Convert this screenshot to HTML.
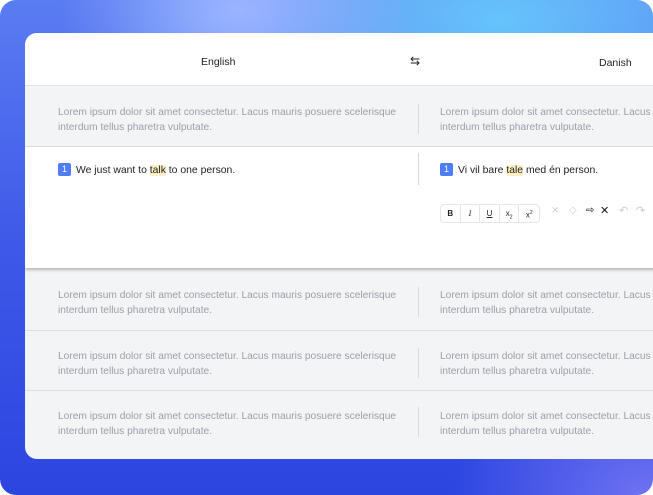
<!DOCTYPE html>
<html><head><style>
*{margin:0;padding:0;box-sizing:border-box}
html,body{width:653px;height:495px;background:#fff;overflow:hidden}
.bg{position:absolute;left:0;top:0;width:653px;height:495px;border-radius:16px;overflow:hidden;
background:radial-gradient(ellipse 180px 120px at 240px 10px,#9cb4ff 0%,rgba(150,180,255,0) 100%),
radial-gradient(ellipse 380px 200px at 500px 20px,#66c4fb 0%,rgba(102,196,251,0) 100%),
radial-gradient(ellipse 200px 140px at 650px 495px,#6f72f2 0%,rgba(111,114,242,0) 100%),
linear-gradient(180deg,#5a7cf2 0%,#3e58e8 50%,#2c45e0 100%);}
.card{position:absolute;left:25px;top:33px;width:640px;height:426px;border-radius:12px;background:#f3f4f6;overflow:hidden;font-family:"Liberation Sans",sans-serif}
.hdr{position:absolute;left:0;top:0;width:100%;height:53px;background:#fff;border-bottom:1px solid #e1e3e7;font-size:10.5px;color:#222}
.row{position:absolute;left:0;width:100%;border-bottom:1px solid #dcdee2}
.t{position:absolute;font-size:10.2px;line-height:15px;color:#9b9fa7;white-space:nowrap}
.div{position:absolute;left:393px;width:1px;background:#d8dadf}
.act{position:absolute;left:0;top:114px;width:100%;height:121px;background:#fff;box-shadow:0 2px 3px rgba(0,0,0,.25)}
.n{display:inline-block;width:13px;height:13px;background:#4f7df5;color:#fff;border-radius:2px;font-size:9px;text-align:center;line-height:13px;margin-right:5px;vertical-align:1px}
.s{font-size:10.4px;color:#222;position:absolute;top:16px}
.hl{background:#fcefc6;border-radius:2px}
.tb{position:absolute;left:415px;top:57px;height:19px;width:100px;border:1px solid #e4e6ea;border-radius:4px;display:flex}
.tb div{width:20px;border-right:1px solid #e4e6ea;font-size:8px;text-align:center;line-height:17px;color:#222}
.tb div:last-child{border:none}
</style></head><body>
<div class="bg"></div>
<div class="card">
 <div class="hdr">
  <span style="position:absolute;left:176px;top:23px">English</span>
  <span style="position:absolute;left:385px;top:21px;font-size:12px">&#8646;</span>
  <span style="position:absolute;left:574px;top:24px">Danish</span>
 </div>
 <div class="row" style="top:54px;height:60px"></div>
 <div class="t" style="left:33px;top:72px">Lorem ipsum dolor sit amet consectetur. Lacus mauris posuere scelerisque<br>interdum tellus pharetra vulputate.</div>
 <div class="t" style="left:415px;top:72px">Lorem ipsum dolor sit amet consectetur. Lacus mauris<br>interdum tellus pharetra vulputate.</div>
 <div class="div" style="top:71px;height:30px"></div>
 <div class="act">
  <div class="s" style="left:33px"><span class="n">1</span>We just want to <span class="hl">talk</span> to one person.</div>
  <div class="s" style="left:415px"><span class="n">1</span>Vi vil bare <span class="hl">tale</span> med én person.</div>
  <div class="div" style="top:6px;height:32px"></div>
  <div class="tb"><div style="font-weight:bold">B</div><div style="font-style:italic;font-family:'Liberation Serif',serif">I</div><div style="text-decoration:underline">U</div><div>x<sub style="font-size:5px">2</sub></div><div>x<sup style="font-size:5px">2</sup></div></div>
  <div style="position:absolute;left:526px;top:58px;font-size:10px;color:#ccc">&#10799;</div>
  <div style="position:absolute;left:544px;top:58px;font-size:10px;color:#ccc">&#9671;</div>
  <div style="position:absolute;left:561px;top:58px;font-size:10px;color:#111">&#8680;</div>
  <div style="position:absolute;left:575px;top:57px;font-size:11px;color:#111">&#10005;</div>
  <div style="position:absolute;left:594px;top:57px;font-size:11px;color:#ccc">&#8630;</div>
  <div style="position:absolute;left:611px;top:57px;font-size:11px;color:#ccc">&#8631;</div>
 </div>
 <div class="row" style="top:236px;height:62px"></div>
 <div class="t" style="left:33px;top:255px">Lorem ipsum dolor sit amet consectetur. Lacus mauris posuere scelerisque<br>interdum tellus pharetra vulputate.</div>
 <div class="t" style="left:415px;top:255px">Lorem ipsum dolor sit amet consectetur. Lacus mauris<br>interdum tellus pharetra vulputate.</div>
 <div class="div" style="top:254px;height:30px"></div>
 <div class="row" style="top:298px;height:60px"></div>
 <div class="t" style="left:33px;top:316px">Lorem ipsum dolor sit amet consectetur. Lacus mauris posuere scelerisque<br>interdum tellus pharetra vulputate.</div>
 <div class="t" style="left:415px;top:316px">Lorem ipsum dolor sit amet consectetur. Lacus mauris<br>interdum tellus pharetra vulputate.</div>
 <div class="div" style="top:315px;height:30px"></div>
 <div class="t" style="left:33px;top:376px">Lorem ipsum dolor sit amet consectetur. Lacus mauris posuere scelerisque<br>interdum tellus pharetra vulputate.</div>
 <div class="t" style="left:415px;top:376px">Lorem ipsum dolor sit amet consectetur. Lacus mauris<br>interdum tellus pharetra vulputate.</div>
 <div class="div" style="top:374px;height:30px"></div>
</div>
</body></html>
